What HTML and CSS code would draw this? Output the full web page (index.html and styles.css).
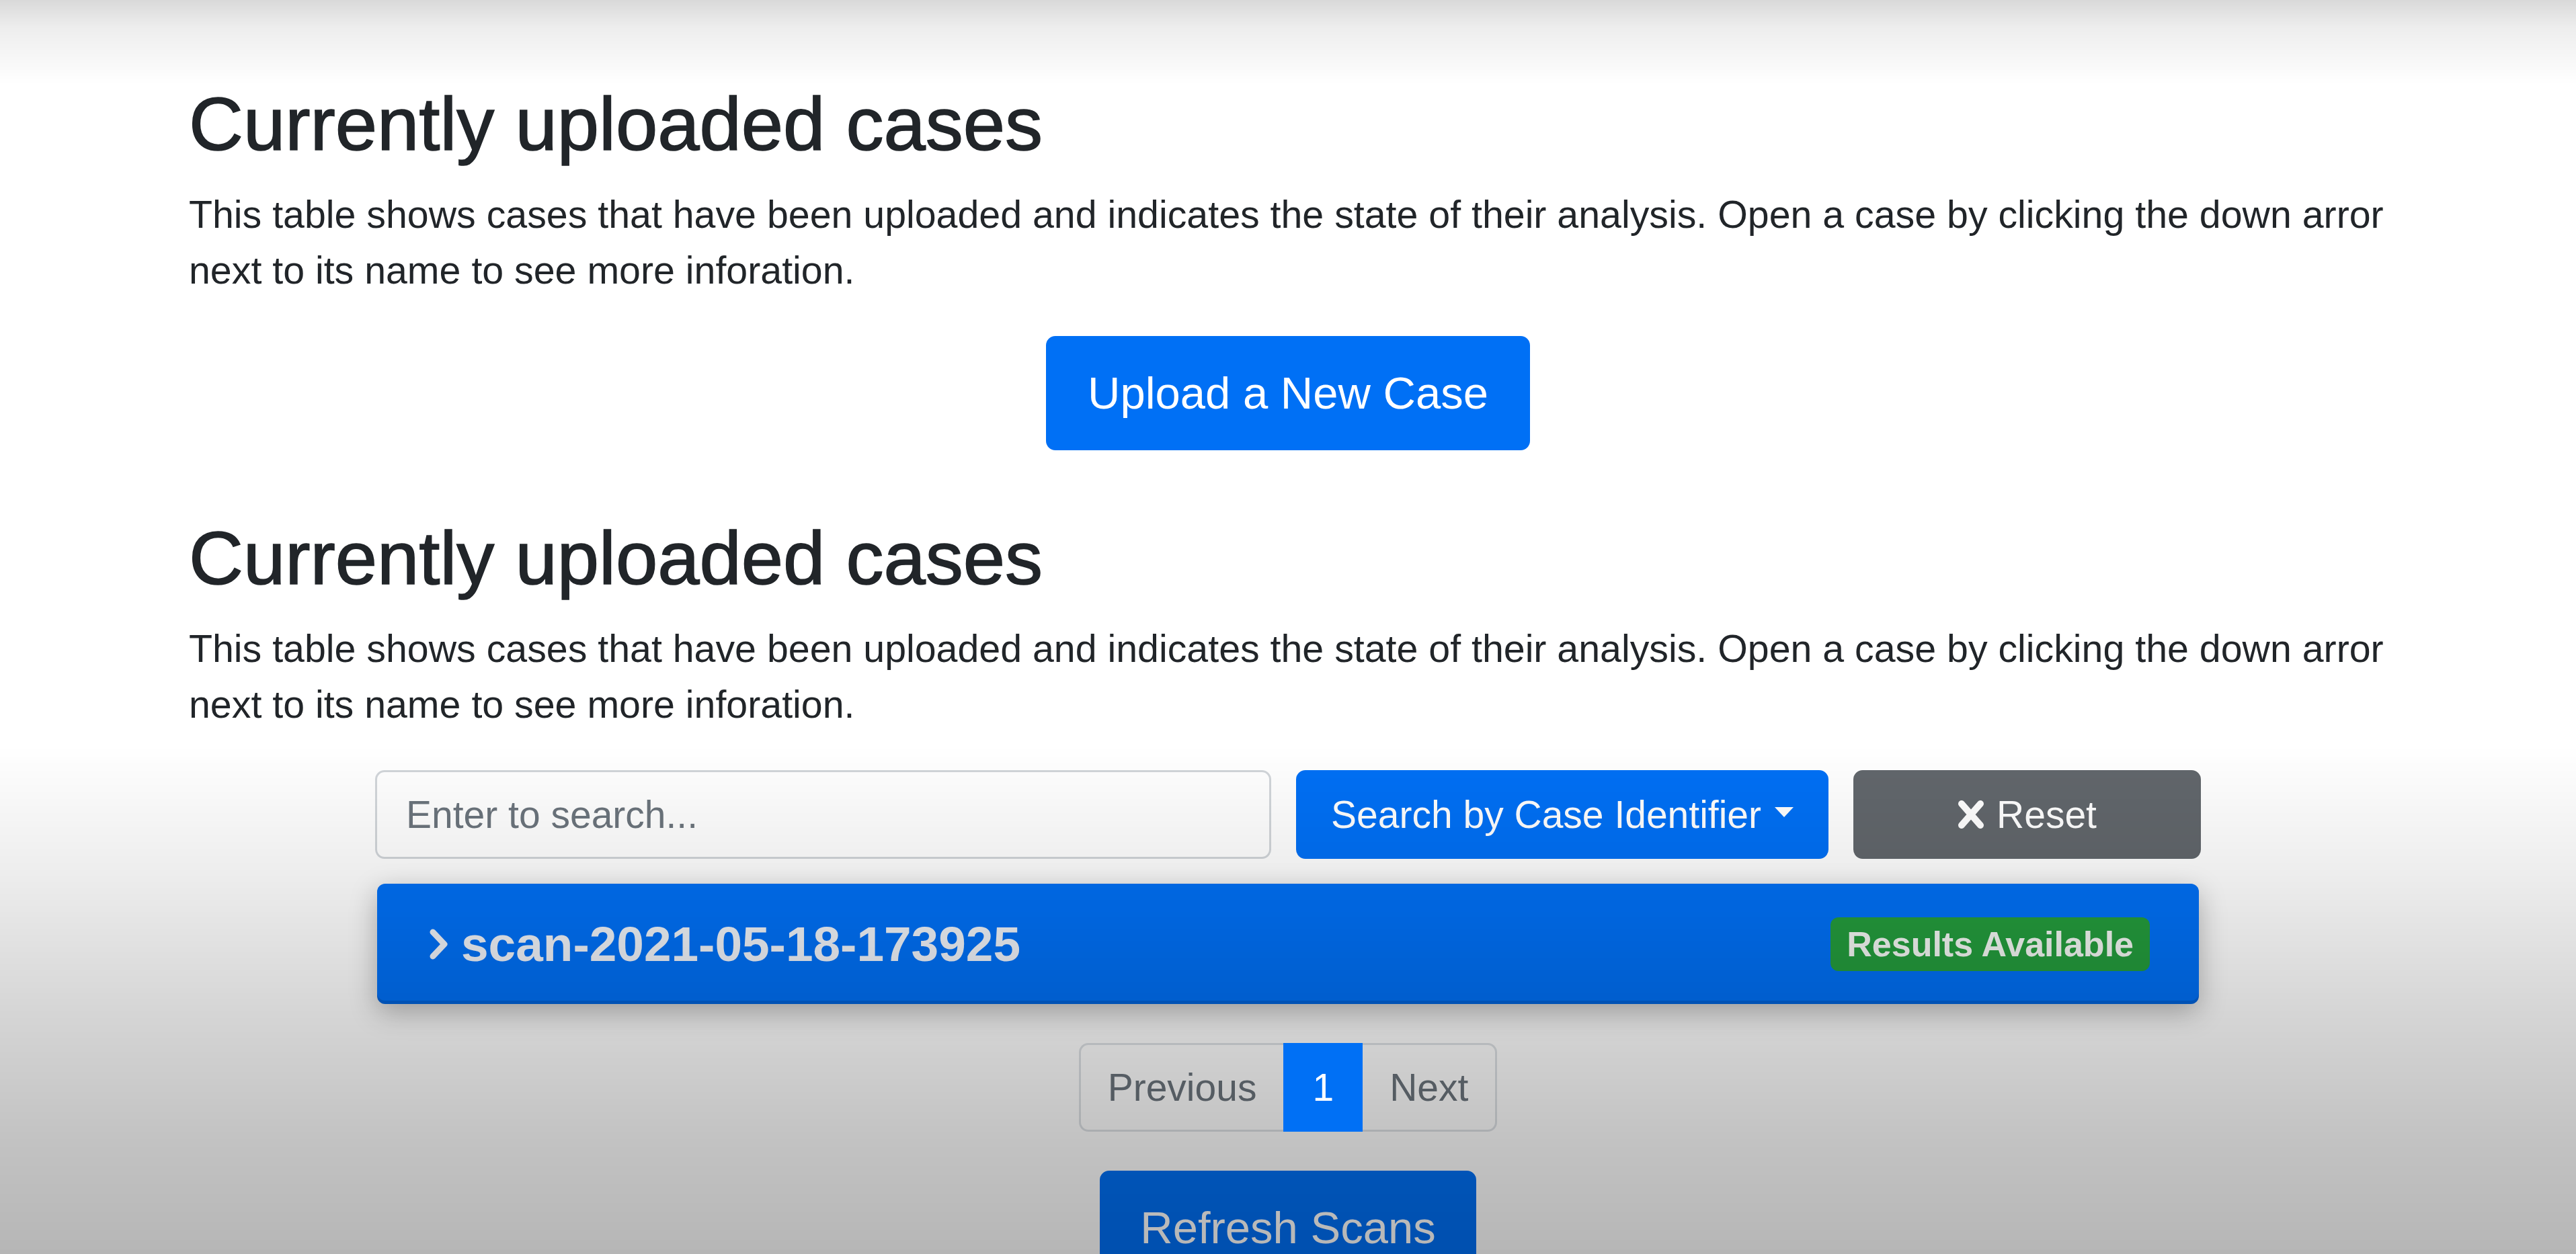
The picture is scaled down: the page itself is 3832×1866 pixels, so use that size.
FILE: index.html
```html
<!DOCTYPE html>
<html lang="en">
<head>
<meta charset="utf-8">
<title>Currently uploaded cases</title>
<link rel="stylesheet" href="styles.css">
</head>
<body>
<main class="container">
  <section class="intro">
    <h2 class="title">Currently uploaded cases</h2>
    <p class="desc">This table shows cases that have been uploaded and indicates the state of their analysis. Open a case by clicking the down arror next to its name to see more inforation.</p>
    <div class="center">
      <button class="btn btn-primary btn-lg">Upload a New Case</button>
    </div>
  </section>

  <section class="cases">
    <h2 class="title">Currently uploaded cases</h2>
    <p class="desc">This table shows cases that have been uploaded and indicates the state of their analysis. Open a case by clicking the down arror next to its name to see more inforation.</p>

    <div class="panel">
      <div class="search-row">
        <input class="search-input" type="text" placeholder="Enter to search...">
        <button class="btn btn-primary btn-search">Search by Case Identifier<span class="caret"></span></button>
        <button class="btn btn-secondary btn-reset">
          <svg class="x-icon" viewBox="0 0 40 44" width="40" height="44" aria-hidden="true"><path d="M6 6 L34 38 M34 6 L6 38" stroke="currentColor" stroke-width="10" stroke-linecap="round" fill="none"/></svg>
          <span>Reset</span>
        </button>
      </div>

      <div class="case-row">
        <div class="case-name">
          <svg class="chevron" viewBox="0 0 30 46" width="30" height="46" aria-hidden="true"><path d="M6 5 L23 23 L6 41" stroke="currentColor" stroke-width="9" stroke-linecap="round" stroke-linejoin="round" fill="none"/></svg>
          <span>scan-2021-05-18-173925</span>
        </div>
        <span class="badge">Results Available</span>
      </div>
    </div>

    <nav class="pager">
      <ul class="pager-list">
        <li><span class="page-link disabled first">Previous</span></li>
        <li><span class="page-link active">1</span></li>
        <li><span class="page-link disabled last">Next</span></li>
      </ul>
    </nav>

    <div class="center">
      <button class="btn btn-primary btn-lg btn-refresh">Refresh Scans</button>
    </div>
  </section>
</main>
</body>
</html>
```

FILE: styles.css
```css
* { box-sizing: border-box; }

html, body {
  margin: 0;
  padding: 0;
  background: #ffffff;
}

body {
  font-family: "Liberation Sans", Arial, sans-serif;
  color: #212529;
  min-height: 1866px;
  overflow: hidden;
}

body::after {
  content: "";
  position: fixed;
  left: 0;
  top: 0;
  right: 0;
  bottom: 0;
  pointer-events: none;
  background: linear-gradient(to bottom,
    rgba(0,0,0,0.15) 0px,
    rgba(0,0,0,0.07) 40px,
    rgba(0,0,0,0) 125px,
    rgba(0,0,0,0) 1110px,
    rgba(0,0,0,0.07) 1300px,
    rgba(0,0,0,0.16) 1500px,
    rgba(0,0,0,0.24) 1700px,
    rgba(0,0,0,0.285) 100%);
}

.container {
  width: 3270px;
  margin: 0 auto;
  padding-top: 118px;
}

.title {
  margin: 0 0 26px 0;
  font-size: 112px;
  line-height: 134px;
  font-weight: 500;
  color: #212529;
  -webkit-text-stroke: 1.6px #212529;
}

.desc {
  margin: 0 0 56px 0;
  font-size: 57.3px;
  line-height: 83px;
  color: #212529;
}

.center {
  display: flex;
  justify-content: center;
}

.btn {
  font-family: inherit;
  border: 3px solid transparent;
  border-radius: 14px;
  color: #ffffff;
  cursor: pointer;
}

.btn-primary {
  background: #0070f5;
  border-color: #0070f5;
}

.btn-secondary {
  background: #62676c;
  border-color: #62676c;
}

.btn-lg {
  font-size: 67px;
  line-height: 100px;
  padding: 32px 59px;
}

.cases {
  margin-top: 94px;
}

.panel {
  width: 2716px;
  margin: 0 auto;
}

.search-row {
  display: flex;
  gap: 37px;
  height: 132px;
}

.search-input {
  flex: 1;
  min-width: 0;
  height: 132px;
  font-family: inherit;
  font-size: 57px;
  line-height: 85px;
  padding: 20px 43px;
  border: 3px solid #d2d6da;
  border-radius: 14px;
  background: #ffffff;
  color: #495057;
  outline: none;
}

.search-input::placeholder {
  color: #6c757d;
}

.btn-search {
  width: 792px;
  height: 132px;
  font-size: 57px;
  line-height: 85px;
  padding: 0;
  display: flex;
  align-items: center;
  justify-content: center;
}

.caret {
  display: inline-block;
  margin-left: 20px;
  width: 0;
  height: 0;
  border-top: 15px solid #ffffff;
  border-left: 14px solid transparent;
  border-right: 14px solid transparent;
  position: relative;
  top: -4px;
}

.btn-reset {
  width: 517px;
  height: 132px;
  font-size: 57px;
  line-height: 85px;
  padding: 0;
  display: flex;
  align-items: center;
  justify-content: center;
  gap: 18px;
}

.x-icon {
  display: block;
  width: 40px;
  height: 44px;
  color: #ffffff;
}

.case-row {
  margin: 37px 3px 0 3px;
  height: 179px;
  display: flex;
  align-items: center;
  justify-content: space-between;
  padding: 0 73px 0 77px;
  background: #0070f5;
  border-radius: 12px;
  box-shadow: inset 0 -5px 0 rgba(0,0,0,0.12), 0 12px 40px rgba(0,0,0,0.28);
  color: #eef2f8;
}

.case-name {
  display: flex;
  align-items: center;
  gap: 18px;
  font-size: 73px;
  font-weight: 700;
  line-height: 86px;
}

.chevron {
  display: block;
  width: 30px;
  height: 46px;
}

.badge {
  display: inline-flex;
  align-items: center;
  height: 80px;
  padding: 0 24px;
  background: #249c3d;
  border-radius: 12px;
  font-size: 52px;
  font-weight: 700;
  color: #f2f6f2;
}

.pager {
  margin-top: 58px;
  display: flex;
  justify-content: center;
}

.pager-list {
  list-style: none;
  margin: 0;
  padding: 0;
  display: flex;
}

.page-link {
  display: block;
  font-size: 57px;
  line-height: 86px;
  padding: 20px 40px;
  border: 3px solid #dee2e6;
  margin-left: -3px;
  background: #ffffff;
  color: #6c757d;
}

.page-link.first {
  margin-left: 0;
  border-radius: 14px 0 0 14px;
}

.page-link.last {
  border-radius: 0 14px 14px 0;
}

.page-link.active {
  background: #0070f5;
  border-color: #0070f5;
  color: #ffffff;
  position: relative;
  z-index: 1;
}

.btn-refresh {
  margin-top: 58px;
  padding: 32px 57px;
}
```
